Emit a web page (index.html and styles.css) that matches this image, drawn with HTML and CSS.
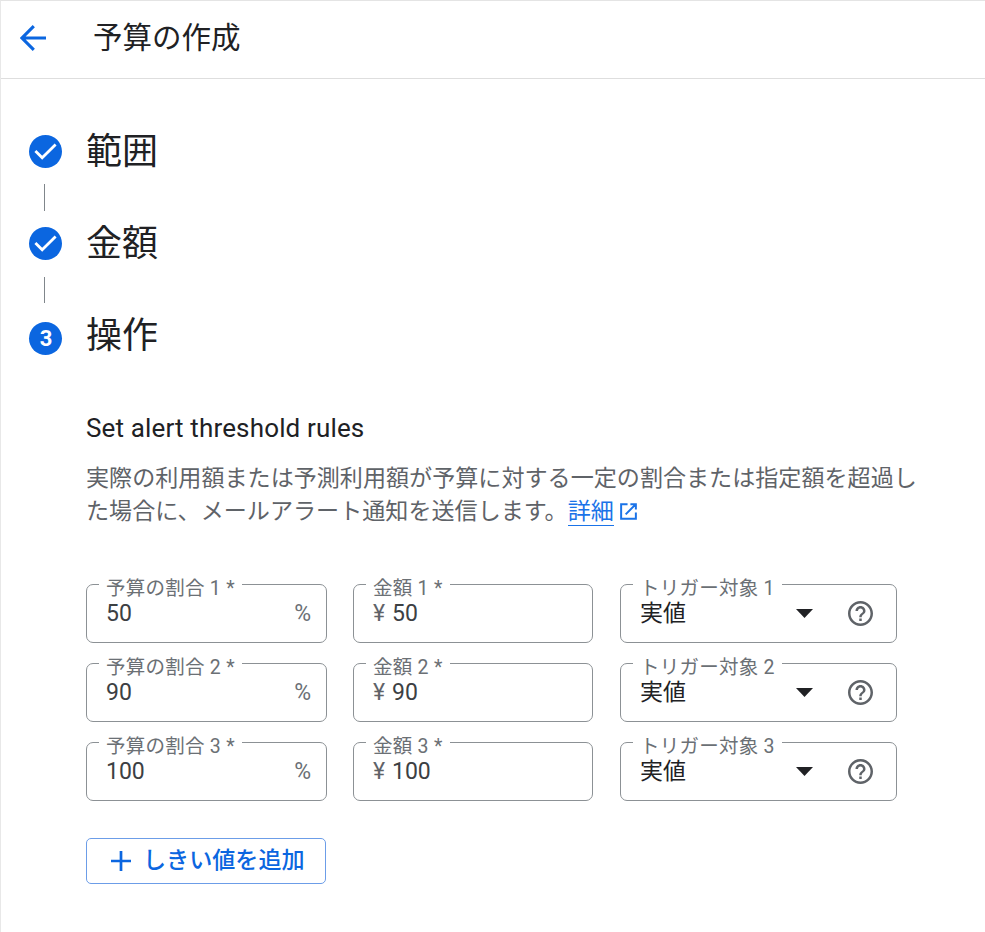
FILE: index.html
```html
<!DOCTYPE html>
<html lang="ja">
<head>
<meta charset="utf-8">
<title>予算の作成</title>
<link rel="stylesheet" href="styles.css">
</head>
<body>
<svg width="0" height="0" class="defs" aria-hidden="true">
  <symbol id="check" viewBox="0 0 33 33"><circle cx="16.5" cy="16.5" r="16.5" fill="#0b66e0"/><path d="M6.400 15.900 L13.2 22.700 L26.600 9.500" fill="none" stroke="#fff" stroke-width="2.8"/></symbol>
  <symbol id="help" viewBox="2 2 20 20"><path fill="#5f6368" d="M11 18h2v-2h-2v2zm1-16C6.48 2 2 6.48 2 12s4.480 10 10 10 10-4.480 10-10S17.520 2 12 2zm0 18c-4.410 0-8-3.590-8-8s3.590-8 8-8 8 3.590 8 8-3.590 8-8 8zm0-14c-2.210 0-4 1.790-4 4h2c0-1.100.9-2 2-2s2 .9 2 2c0 2-3 1.750-3 5h2c0-2.250 3-2.500 3-5 0-2.210-1.790-4-4-4z"/></symbol>
</svg>
<div class="page">
  <header class="topbar">
    <svg class="back" viewBox="0 0 26 26"><path d="M26 13H2.500M13.800 1.200L2 13l11.800 11.800" fill="none" stroke="#0b66e0" stroke-width="3.1"/></svg>
    <h1>予算の作成</h1>
  </header>
  <main>
    <section class="step">
      <svg class="badge"><use href="#check"/></svg><h2>範囲</h2>
    </section>
    <div class="line"></div>
    <section class="step">
      <svg class="badge"><use href="#check"/></svg><h2>金額</h2>
    </section>
    <div class="line second"></div>
    <section class="step current">
      <span class="badge num">3</span><h2>操作</h2>
    </section>
    <div class="content">
      <h3>Set alert threshold rules</h3>
      <p>実際の利用額または予測利用額が予算に対する一定の割合または指定額を超過し<br>た場合に、メールアラート通知を送信します。<a>詳細</a><svg class="ext" viewBox="0 0 18 18"><path d="M8 1.200H1.200V16.800H16.800V10M11 1.200H16.800V7M16.500 1.500L6 12" fill="none" stroke="#1a73e8" stroke-width="2.1"/></svg></p>
      <div class="rules">
        <div class="field"><label>予算の割合 1 *</label><span class="value">50</span><span class="unit">%</span></div>
        <div class="field"><label>金額 1 *</label><span class="yen">¥</span><span class="value">50</span></div>
        <div class="field select"><label>トリガー対象 1</label><span class="value">実値</span><i class="arrow"></i><svg class="help"><use href="#help"/></svg></div>
        <div class="field"><label>予算の割合 2 *</label><span class="value">90</span><span class="unit">%</span></div>
        <div class="field"><label>金額 2 *</label><span class="yen">¥</span><span class="value">90</span></div>
        <div class="field select"><label>トリガー対象 2</label><span class="value">実値</span><i class="arrow"></i><svg class="help"><use href="#help"/></svg></div>
        <div class="field"><label>予算の割合 3 *</label><span class="value">100</span><span class="unit">%</span></div>
        <div class="field"><label>金額 3 *</label><span class="yen">¥</span><span class="value">100</span></div>
        <div class="field select"><label>トリガー対象 3</label><span class="value">実値</span><i class="arrow"></i><svg class="help"><use href="#help"/></svg></div>
      </div>
      <button><svg class="plus" viewBox="0 0 20 20"><path d="M10 0V20M0 10H20" stroke="#0b66e0" stroke-width="2.700"/></svg><span>しきい値を追加</span></button>
    </div>
  </main>
</div>
</body>
</html>
```
FILE: styles.css
```css
* { box-sizing: border-box; }
body {
  margin: 0;
  background: #fff;
  color: #202124;
  font-family: Roboto, "Noto Sans CJK JP", sans-serif;
}
h1, h2, h3, p { margin: 0; font-weight: 400; }
svg { display: block; flex: none; }
.defs { display: none; }
.page {
  height: 932px;
  overflow: hidden;
  border-top: 1px solid #e4e4e4;
  border-left: 1px solid #e8e8e8;
}
.topbar {
  display: flex;
  align-items: center;
  height: 78px;
  padding: 0 0 3px 19px;
  border-bottom: 1px solid #dedede;
}
.back { width: 26px; height: 26px; }
h1 {
  margin-left: 47px;
  font-size: 29.500px;
  line-height: 40px;
}
main { padding: 50px 0 0 28px; }
.step {
  display: flex;
  align-items: center;
  height: 44px;
}
.badge { width: 33px; height: 33px; }
.num {
  margin-top: 2px;
  padding-left: 1px;
  border-radius: 50%;
  background: #0b66e0;
  color: #fff;
  font-size: 22px;
  font-weight: 700;
  line-height: 33px;
  text-align: center;
}
h2 {
  margin-left: 24px;
  padding-top: 2px;
  font-size: 36px;
  line-height: 44px;
}
.current h2 { padding: 0 0 2px; }
.line {
  width: 1px;
  height: 27px;
  margin: 11px 0 10px 15px;
  background: #80868b;
}
.line.second { margin: 12px 0 12px 15px; height: 26px; }
.content { width: 840px; margin: 51px 0 0 57px; }
h3 {
  font-size: 26px;
  line-height: 36px;
  letter-spacing: .15px;
}
p {
  margin-top: 16px;
  color: #5f6368;
  font-size: 23.080px;
  line-height: 33px;
  white-space: nowrap;
}
a {
  display: inline-block;
  height: 31px;
  border-bottom: 1px solid #1a73e8;
  color: #1a73e8;
}
.ext {
  display: inline-block;
  width: 17px;
  height: 17px;
  margin-left: 6px;
  vertical-align: -1px;
}
.rules {
  display: grid;
  grid-template-columns: 241px 240px 277px;
  grid-auto-rows: 59px;
  column-gap: 26px;
  row-gap: 20px;
  margin-top: 56px;
}
.field {
  position: relative;
  display: flex;
  padding: 14px 15px 0 19px;
  border: 1px solid #8c9195;
  border-radius: 7px;
  font-size: 23px;
  line-height: 30px;
}
.select { left: 1px; }
label {
  position: absolute;
  left: 12px;
  top: -8px;
  height: 20px;
  padding: 0 7px;
  background: #fff;
  color: #6b7075;
  font-size: 19.500px;
  line-height: 24px;
  letter-spacing: .25px;
}
.value { position: relative; color: #3c4043; }
.unit { margin-left: auto; color: #6b7075; }
.yen { width: 19px; color: #5f6368; }
.select .value { color: #202124; }
.arrow {
  margin: 10px 35px 0 auto;
  width: 17px;
  height: 9px;
  background: #202124;
  clip-path: polygon(0 0, 100% 0, 50% 100%);
}
.help { width: 25px; height: 25px; margin: 2px 8px 0 0; }
button {
  display: flex;
  align-items: center;
  width: 240px;
  height: 46px;
  margin-top: 37px;
  padding: 0 0 0 24px;
  border: 1px solid #6c9de8;
  border-radius: 5px;
  background: #fff;
  color: #0b66e0;
  font: 500 23.100px/32px Roboto, "Noto Sans CJK JP", sans-serif;
}
.plus { width: 20px; height: 20px; margin-right: 12px; }
```
